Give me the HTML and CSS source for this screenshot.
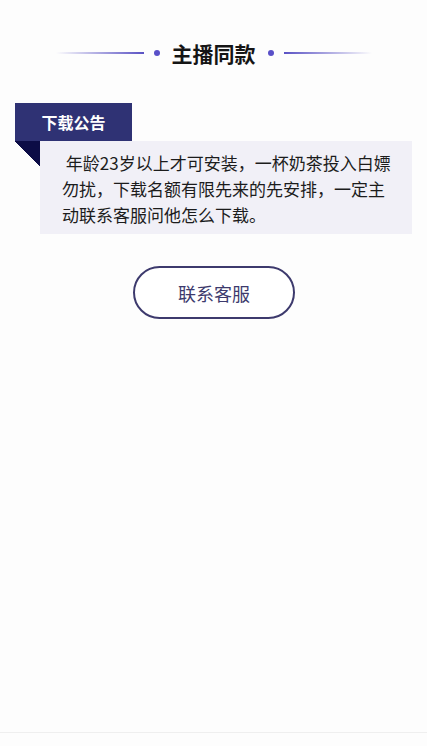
FILE: index.html
```html
<!DOCTYPE html>
<html lang="zh">
<head>
  <meta charset="UTF-8" />
  <meta name="viewport" content="width=device-width, initial-scale=1" />
  <title>主播同款</title>
  <link rel="stylesheet" href="styles.css">
</head>
<body>

  <div class="page">
    <!-- 标题 -->
    <div class="title-row">
      <span class="line line-left"></span>
      <span class="dot"></span>
      <h1 class="title">主播同款</h1>
      <span class="dot"></span>
      <span class="line line-right"></span>
    </div>

    <!-- 公告 -->
    <div class="notice">
      <div class="notice-tag">下载公告</div>
      <div class="notice-row">
        <span class="fold"></span>
        <p class="notice-body">&nbsp;年龄23岁以上才可安装，一杯奶茶投入白嫖勿扰，下载名额有限先来的先安排，一定主动联系客服问他怎么下载。</p>
      </div>
    </div>

    <div class="btn-wrap">
      <button class="contact-btn">联系客服</button>
    </div>
  </div>

  <div class="bottom-bar"></div>

</body>
</html>
```

FILE: styles.css
```css
* {
  margin: 0;
  padding: 0;
  box-sizing: border-box;
}

html, body {
  height: 100%;
  overflow: hidden;
}

body {
  background: #fdfdfd;
  font-family: "Noto Sans CJK SC", "Noto Sans", sans-serif;
  color: #1a1a1a;
  display: flex;
  flex-direction: column;
}

.page {
  flex: 1;
}

.title-row {
  display: flex;
  align-items: center;
  justify-content: center;
  padding-top: 37px;
  height: 69px;
}

.line {
  width: 88px;
  height: 2px;
}

.line-left {
  background: linear-gradient(to right, rgba(90, 80, 200, 0), #5a52c4);
}

.line-right {
  background: linear-gradient(to left, rgba(90, 80, 200, 0), #5a52c4);
}

.dot {
  width: 6px;
  height: 6px;
  border-radius: 50%;
  background: #5950c8;
  margin: 0 10px;
}

.title {
  font-size: 21px;
  font-weight: bold;
  color: #151515;
  margin: 0 2px;
  line-height: 32px;
}

.notice {
  margin-top: 34px;
  padding-left: 15px;
  padding-right: 15px;
}

.notice-tag {
  width: 117px;
  height: 38px;
  background: #2f3274;
  color: #fff;
  font-size: 16px;
  font-weight: bold;
  line-height: 38px;
  text-align: center;
}

.notice-row {
  display: flex;
  align-items: flex-start;
}

.fold {
  width: 25px;
  height: 25px;
  background: linear-gradient(to top right, transparent 50%, #0c0c46 50%);
  flex-shrink: 0;
}

.notice-body {
  flex: 1;
  background: #f1f0f7;
  font-size: 17px;
  line-height: 26px;
  color: #1c1c1c;
  padding: 9px 18px 6px 22px;
}

.btn-wrap {
  display: flex;
  justify-content: center;
  margin-top: 32px;
  padding-left: 1px;
}

.contact-btn {
  width: 162px;
  height: 53px;
  border: 2px solid #3d3a6d;
  border-radius: 27px;
  background: #fff;
  color: #3d3a6d;
  font-family: "Noto Sans CJK SC", "Noto Sans", sans-serif;
  font-size: 18px;
}

.bottom-bar {
  height: 14px;
  border-top: 1px solid #efefef;
  background: #fdfdfd;
}
```
